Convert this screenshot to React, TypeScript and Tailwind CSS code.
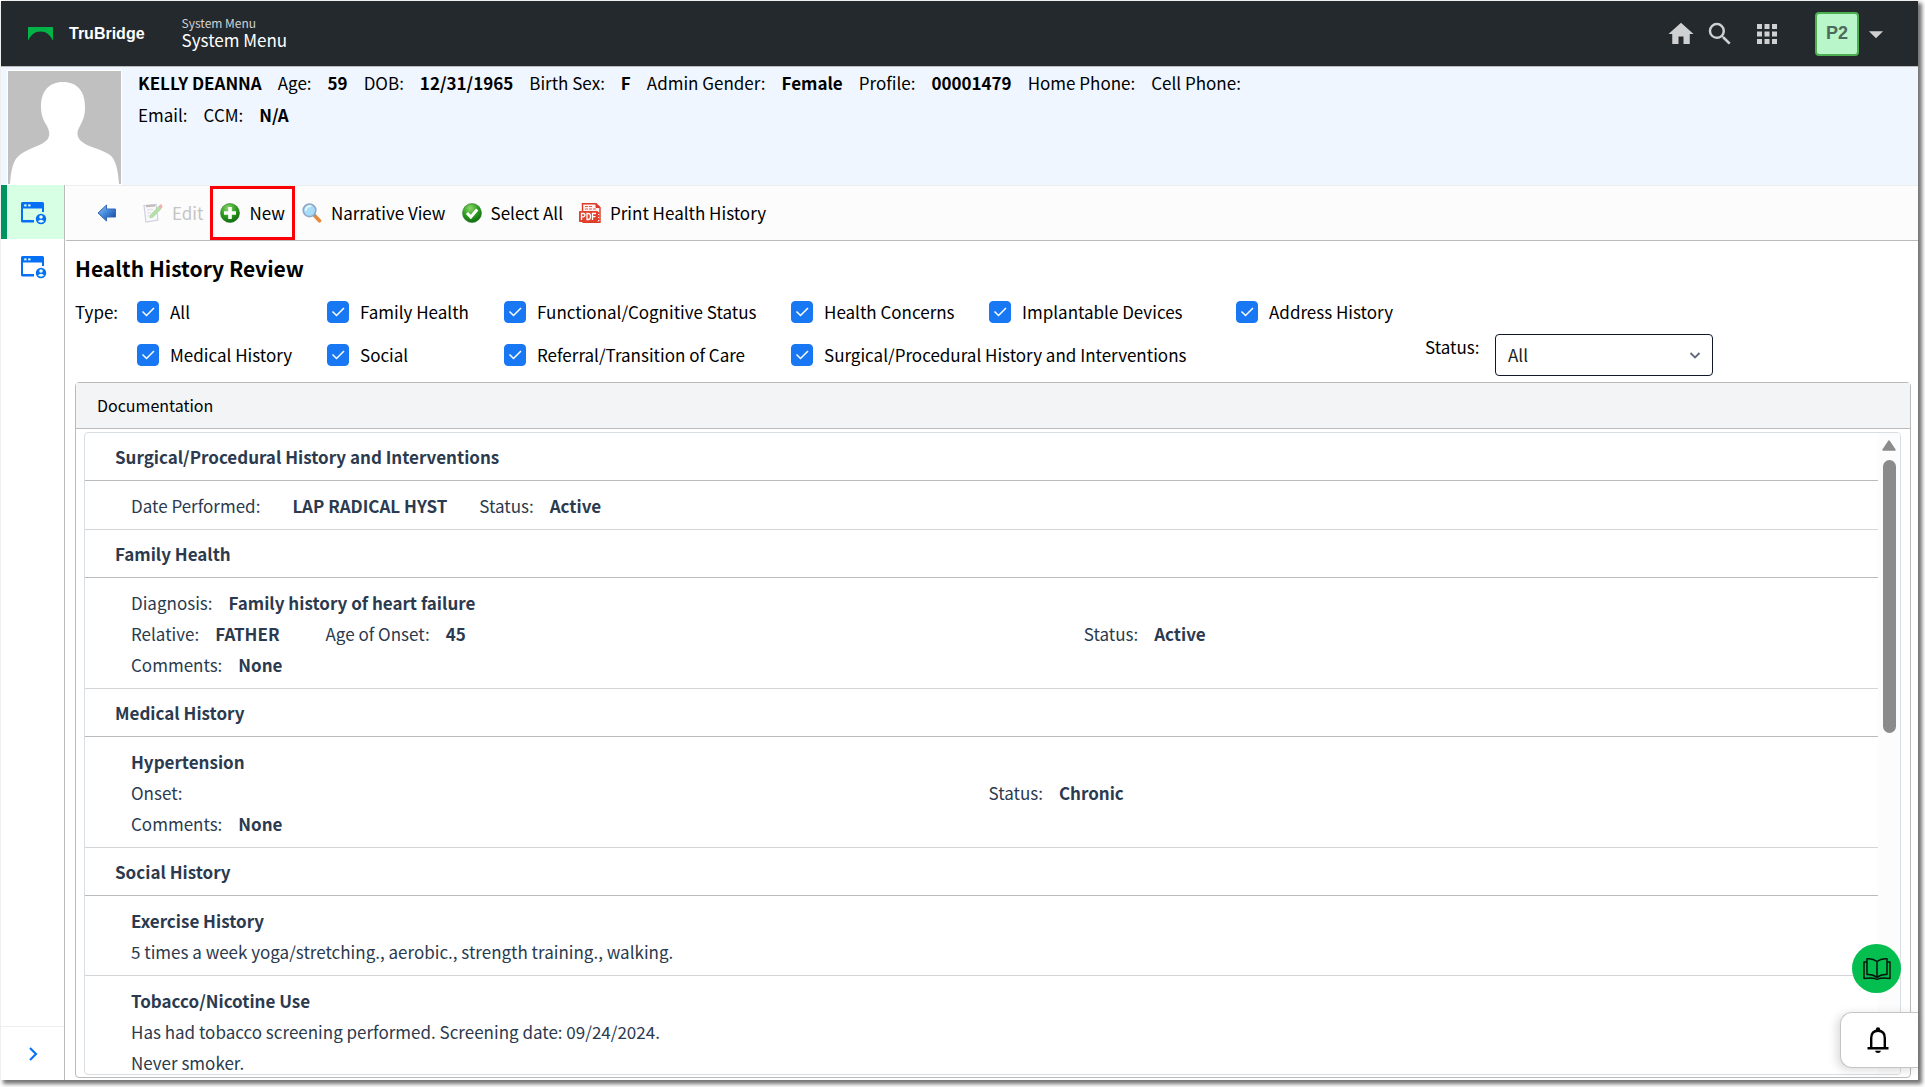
import type { ReactNode } from "react";
import { MdApps, MdArrowDropDown, MdHome, MdSearch } from "react-icons/md";

function BridgeLogo() {
  return (
    <svg width="25" height="13" viewBox="0 0 25 13" aria-hidden="true">
      <path d="M0 0H25V13H24.5C22 8 18 4.6 12.5 4.6S3 8 .5 13H0Z" fill="#04b347" />
    </svg>
  );
}

function WindowUserIcon() {
  return (
    <svg width="26" height="24" viewBox="0 0 26 24" aria-hidden="true">
      <path d="M0 2.5Q0 1 1.5 1H21.500Q23 1 23 2.500V11H21V7.500H2V19H13V21.500H1.500Q0 21.500 0 20Z" fill="#0570f5" />
      <rect x="3.200" y="3.400" width="2.300" height="2" fill="#e6fff0" />
      <rect x="7.200" y="3.400" width="2.300" height="2" fill="#e6fff0" />
      <circle cx="20" cy="18" r="5.200" fill="#0570f5" />
      <circle cx="20" cy="16" r="1.800" fill="#e6fff0" />
      <path d="M16.800 20.300Q20 17.200 23.200 20.300Q20 23 16.800 20.300Z" fill="#e6fff0" />
    </svg>
  );
}

function BackArrowIcon() {
  return (
    <svg width="20" height="18" viewBox="0 0 20 18" aria-hidden="true">
      <defs>
        <linearGradient id="back" x1="0" y1="0" x2="1" y2="1">
          <stop offset="0" stopColor="#8fc4f5" />
          <stop offset="0.5" stopColor="#3f86d8" />
          <stop offset="1" stopColor="#173f8f" />
        </linearGradient>
      </defs>
      <path d="M1 9 9.500 1V5H18.500V13H9.500V17Z" fill="url(#back)" stroke="#3568b4" strokeWidth="1" strokeLinejoin="round" />
    </svg>
  );
}

function EditIcon() {
  return (
    <svg width="20" height="20" viewBox="0 0 20 20" opacity="0.45" aria-hidden="true">
      <path d="M1 2.500 13 1.500 15 17 3 19Z" fill="#f5f5fb" stroke="#9a9ab8" strokeWidth="1.200" />
      <path d="M3 3.200 12 2.400" stroke="#7c6a6a" strokeWidth="2" />
      <path d="M4 7 10 6.500M4.400 10 8 9.700M4.800 13 7 12.800" stroke="#b4b4cc" />
      <path d="M15.500 3.500 18 6 10 14 6.800 15 7.600 12Z" fill="#5cc23c" stroke="#3b9a28" strokeWidth=".6" />
      <path d="M15.500 3.500 17 1.400Q19.600 1 19.500 4L18 6Z" fill="#e8584c" />
    </svg>
  );
}

function GreenBall({ id, children }: { id: string; children: ReactNode }) {
  return (
    <svg width="20" height="20" viewBox="0 0 20 20" aria-hidden="true">
      <defs>
        <radialGradient id={id} cx="0.400" cy="0.250" r="0.800">
          <stop offset="0" stopColor="#8ad86a" />
          <stop offset="0.550" stopColor="#2a9a1e" />
          <stop offset="1" stopColor="#0d6412" />
        </radialGradient>
      </defs>
      <circle cx="10" cy="10" r="9.500" fill={`url(#${id})`} stroke="#2c7d22" strokeWidth=".6" />
      {children}
    </svg>
  );
}

function MagnifierIcon() {
  return (
    <svg width="20" height="20" viewBox="0 0 20 20" aria-hidden="true">
      <path d="M12.500 12.500 17.500 17.800" stroke="#e58a3a" strokeWidth="3.600" strokeLinecap="round" />
      <path d="M11 11 13 13" stroke="#8f8f98" strokeWidth="2" />
      <circle cx="7.500" cy="7.300" r="6.300" fill="#a9dcf8" stroke="#8ba9c8" strokeWidth="1.600" />
      <path d="M3.800 7Q4.500 3.200 8.500 3.200" stroke="#ecf9ff" strokeWidth="1.800" fill="none" strokeLinecap="round" />
    </svg>
  );
}

function PdfIcon() {
  return (
    <svg width="22" height="20" viewBox="0 0 22 20" aria-hidden="true">
      <path d="M3.500 9V.8H17L21 4.500V19.200H3.500" fill="#fdf0ee" stroke="#dc3a26" strokeWidth="1.400" />
      <path d="M17 .8V4.500H21" fill="#dc3a26" stroke="#dc3a26" />
      <path d="M6 3.500H14M6 6H17" stroke="#e8604e" strokeWidth="1.200" strokeDasharray="3 1" />
      <rect x="0" y="8" width="19" height="11" rx="1" fill="#e2402b" />
      <path d="M2.500 17V10.500H4.500Q6 10.500 6 12T4.500 13.800H2.500M8 10.500V16.500H9.300Q11.500 16.500 11.500 13.500T9.300 10.500ZM13.500 17V10.500H17M13.500 13.600H16.500" stroke="#fff" strokeWidth="1.300" fill="none" />
      <path d="M19.500 9V17" stroke="#e2402b" strokeWidth="1.400" strokeDasharray="2 1" />
    </svg>
  );
}

function BookIcon() {
  return (
    <svg width="28" height="24" viewBox="0 0 28 24" fill="none" stroke="#06140b" strokeWidth="1.500" strokeLinejoin="round" aria-hidden="true">
      <path d="M14 4.500Q10 1.200 4 1.800V17.500Q10 17 14 20.500Q18 17 24 17.500V1.800Q18 1.200 14 4.500ZM14 4.500V20.500" />
      <path d="M4 5H1V21.500Q8 20.500 12 21.500Q14 23 16 21.500Q20 20.500 27 21.500V5H24" />
    </svg>
  );
}

function BellIcon() {
  return (
    <svg width="22" height="26" viewBox="0 0 22 26" aria-hidden="true">
      <circle cx="11" cy="2.400" r="2.200" fill="#000" />
      <path d="M4.200 21V11Q4.200 3.700 11 3.700T17.800 11V21" fill="none" stroke="#000" strokeWidth="2.400" />
      <path d="M.5 20H21.500V22.500H.5Z" fill="#000" />
      <path d="M8 23.800H14Q13.500 26 11 26T8 23.800Z" fill="#000" />
    </svg>
  );
}

function PatientPhoto() {
  return (
    <svg width="115" height="115" viewBox="0 0 115 115" role="img" aria-label="Patient photo">
      <rect width="115" height="115" fill="#fff" />
      <rect x="1" y="1" width="113" height="113" fill="#c0c0c0" />
      <path
        d="M56 12C42 12 34 21 34 37C34 46 37 51 40 56C43 62 43 66 40 70C34 76 22 78 14 84C6 89 4 100 3 114H112C111 100 109 90 103 85C95 79 80 77 74 71C69 66 70 61 73 56C76 50 78 46 78 37C78 21 70 12 56 12Z"
        fill="#fff"
      />
    </svg>
  );
}

function Checkbox({ label }: { label: string }) {
  return (
    <label className="flex items-center gap-[11px] whitespace-nowrap">
      <span className="relative flex">
        <input type="checkbox" defaultChecked className="peer size-[22px] appearance-none rounded border border-[#1877f2] checked:bg-[#1877f2]" />
        <svg className="pointer-events-none absolute inset-0 hidden peer-checked:block" width="22" height="22" viewBox="0 0 22 22" aria-hidden="true">
          <path d="M5.500 10.500 9.500 14.500 17 7" fill="none" stroke="#fff" strokeWidth="1.500" />
        </svg>
      </span>
      {label}
    </label>
  );
}

function ToolButton({ icon, label, disabled }: { icon: ReactNode; label: string; disabled?: boolean }) {
  return (
    <button type="button" disabled={disabled} className="flex items-center gap-[9px] leading-6 whitespace-nowrap disabled:text-[#c4c4c4]">
      {icon}
      {label}
    </button>
  );
}

function Field({ label, value }: { label: string; value?: string }) {
  return (
    <span className="flex gap-4 whitespace-nowrap">
      <span>{label}:</span>
      {value && <b>{value}</b>}
    </span>
  );
}

function SectionTitle({ children }: { children: ReactNode }) {
  return <h3 className="border-b border-[#b9bbbd] pt-2 pb-2 pl-[30px] leading-[31px] font-bold">{children}</h3>;
}

function Entry({ children }: { children: ReactNode }) {
  return <div className="border-b border-[#d3d5d7] pt-[9px] pr-8 pb-2 pl-[46px] leading-[31px]">{children}</div>;
}

const patient = [
  { label: "Age", value: "59" },
  { label: "DOB", value: "12/31/1965" },
  { label: "Birth Sex", value: "F" },
  { label: "Admin Gender", value: "Female" },
  { label: "Profile", value: "00001479" },
  { label: "Home Phone" },
  { label: "Cell Phone" },
  { label: "Email" },
  { label: "CCM", value: "N/A" },
];

export default function App() {
  return (
    <div className="h-screen min-h-[700px] bg-white pt-px pr-[7px] pb-[7px] pl-px font-['Noto_Sans_CJK_SC',sans-serif] text-[17px] text-black">
      <div className="relative flex h-full flex-col bg-white shadow-[3px_3px_4px_1px_rgba(0,0,0,0.55)]">
        <header className="flex h-[66px] shrink-0 items-center border-b border-[#bbb] bg-[#24292d] pr-[25px] pl-[27px] text-white">
          <BridgeLogo />
          <span className="ml-4 font-['Liberation_Sans',sans-serif] text-base font-bold">TruBridge</span>
          <div className="ml-[37px] pb-1">
            <div className="text-xs leading-4 text-[#d2d3d4]">System Menu</div>
            <div className="leading-[18px]">System Menu</div>
          </div>
          <div className="ml-auto flex items-center text-[#cfd0d1]">
            <button type="button" aria-label="Home"><MdHome size={30} /></button>
            <button type="button" aria-label="Search" className="ml-[9px]"><MdSearch size={30} /></button>
            <button type="button" aria-label="Apps" className="ml-[17px]"><MdApps size={30} /></button>
            <button type="button" aria-label="Account" className="ml-[33px] flex items-center">
              <span className="flex size-11 items-center justify-center rounded border-2 border-[#4caf50] bg-[#b9f6ca] pb-0.5 font-['Liberation_Sans',sans-serif] text-lg font-bold text-[#4d6b5c]">P2</span>
              <MdArrowDropDown size={34} />
            </button>
          </div>
        </header>

        <section className="flex h-[118px] shrink-0 items-start bg-[#eff6ff] pl-[6px]">
          <div className="pt-[3px]">
            <PatientPhoto />
          </div>
          <div className="ml-4 flex max-w-[1130px] flex-wrap content-start gap-x-4 leading-8">
            <b>KELLY DEANNA</b>
            {patient.map((p) => (
              <Field key={p.label} label={p.label} value={p.value} />
            ))}
          </div>
        </section>

        <div className="flex min-h-0 flex-1">
          <nav className="flex w-16 shrink-0 flex-col border-r border-[#bbb]">
            <a href="#patient" aria-label="Patient window" className="flex h-[54px] items-center border-l-[6px] border-[#00935f] bg-[#d6ffe3] pt-0.5 pl-[14px]">
              <WindowUserIcon />
            </a>
            <a href="#chart" aria-label="Chart window" className="flex h-[54px] items-center pt-0.5 pl-5">
              <WindowUserIcon />
            </a>
            <button type="button" aria-label="Expand menu" className="mt-auto flex h-[54px] items-center justify-center border-t border-[#eee]">
              <svg width="10" height="14" viewBox="0 0 10 14" aria-hidden="true">
                <path d="M2 1 8 7 2 13" fill="none" stroke="#0a74f5" strokeWidth="2.200" />
              </svg>
            </button>
          </nav>

          <main className="flex min-w-0 flex-1 flex-col">
            <div className="ml-px flex h-14 shrink-0 items-center border-t border-b border-t-[#eee] border-b-[#bbb] bg-[#fcfcfc] pl-[31px]">
              <button type="button" aria-label="Back"><BackArrowIcon /></button>
              <div className="ml-[26px]">
                <ToolButton icon={<EditIcon />} label="Edit" disabled />
              </div>
              <div className="relative ml-[17px]">
                <ToolButton
                  icon={
                    <GreenBall id="add">
                      <path d="M10 4V16M4 10H16" stroke="#fff" strokeWidth="3.600" />
                    </GreenBall>
                  }
                  label="New"
                />
                <span className="pointer-events-none absolute -inset-x-[10px] -inset-y-[15px] border-[3px] border-[#fb0007]" />
              </div>
              <div className="ml-[17px] flex items-center gap-4">
                <ToolButton icon={<MagnifierIcon />} label="Narrative View" />
                <ToolButton
                  icon={
                    <GreenBall id="ok">
                      <path d="M5 10 8.800 14 15.200 6.500" fill="none" stroke="#fff" strokeWidth="3" />
                    </GreenBall>
                  }
                  label="Select All"
                />
                <ToolButton icon={<PdfIcon />} label="Print Health History" />
              </div>
            </div>

            <div className="flex min-h-0 flex-1 flex-col pr-[7px] pb-[2px] pl-[10px]">
              <h1 className="mt-[11px] text-[21px] leading-8 font-bold">Health History Review</h1>

              <div className="flex items-start pt-[6px]">
                <span className="w-[62px] shrink-0 leading-[43px]">Type:</span>
                <div className="grid grid-cols-[190px_177px_287px_198px_247px_auto] leading-[43px]">
                  <Checkbox label="All" />
                  <Checkbox label="Family Health" />
                  <Checkbox label="Functional/Cognitive Status" />
                  <Checkbox label="Health Concerns" />
                  <Checkbox label="Implantable Devices" />
                  <Checkbox label="Address History" />
                  <Checkbox label="Medical History" />
                  <Checkbox label="Social" />
                  <Checkbox label="Referral/Transition of Care" />
                  <div className="col-span-3">
                    <Checkbox label="Surgical/Procedural History and Interventions" />
                  </div>
                </div>
                <div className="mt-11 ml-8 flex">
                  <label htmlFor="status" className="w-[70px] leading-[26px]">Status:</label>
                  <div className="relative">
                    <select id="status" defaultValue="All" className="h-[42px] w-[218px] appearance-none rounded border border-[#111827] bg-white px-3 text-[#222]">
                      <option>All</option>
                    </select>
                    <svg className="pointer-events-none absolute top-[18px] right-3" width="12" height="8" viewBox="0 0 12 8" aria-hidden="true">
                      <path d="M1.500 1 6 5.500 10.500 1" fill="none" stroke="#5f6b7a" strokeWidth="1.800" />
                    </svg>
                  </div>
                </div>
              </div>

              <section className="mt-[6px] flex min-h-0 flex-1 flex-col rounded-sm border border-[#bbb]">
                <h2 className="shrink-0 border-b border-[#bbb] bg-[#f3f4f6] pl-[21px] text-base leading-[45px]">Documentation</h2>
                <div className="mt-[3px] mr-[9px] mb-[2px] ml-2 flex min-h-0 flex-1 overflow-hidden rounded border border-[#d9dee2] text-[#2b3a4e]">
                  <div className="min-w-0 flex-1 overflow-hidden">
                    <SectionTitle>Surgical/Procedural History and Interventions</SectionTitle>
                    <Entry>
                      <div className="flex gap-8">
                        <span>Date Performed:</span>
                        <b>LAP RADICAL HYST</b>
                        <Field label="Status" value="Active" />
                      </div>
                    </Entry>

                    <SectionTitle>Family Health</SectionTitle>
                    <Entry>
                      <Field label="Diagnosis" value="Family history of heart failure" />
                      <div className="grid grid-cols-[5fr_4fr]">
                        <div className="flex gap-[46px]">
                          <Field label="Relative" value="FATHER" />
                          <Field label="Age of Onset" value="45" />
                        </div>
                        <Field label="Status" value="Active" />
                      </div>
                      <Field label="Comments" value="None" />
                    </Entry>

                    <SectionTitle>Medical History</SectionTitle>
                    <Entry>
                      <b>Hypertension</b>
                      <div className="grid grid-cols-2">
                        <Field label="Onset" />
                        <Field label="Status" value="Chronic" />
                      </div>
                      <Field label="Comments" value="None" />
                    </Entry>

                    <SectionTitle>Social History</SectionTitle>
                    <Entry>
                      <b>Exercise History</b>
                      <p>5 times a week yoga/stretching., aerobic., strength training., walking.</p>
                    </Entry>
                    <Entry>
                      <b>Tobacco/Nicotine Use</b>
                      <p>Has had tobacco screening performed. Screening date: 09/24/2024.</p>
                      <p>Never smoker.</p>
                    </Entry>
                  </div>
                  <div className="flex w-[22px] shrink-0 flex-col items-center bg-[#fcfcfc] pt-[7px]">
                    <svg width="14" height="11" viewBox="0 0 14 11" aria-hidden="true">
                      <path d="M7 1 13 10H1Z" fill="#8b8b8b" stroke="#8b8b8b" strokeWidth="1.500" strokeLinejoin="round" />
                    </svg>
                    <div className="mt-[9px] h-[43%] w-[13px] rounded-full bg-[#8b8b8b]" />
                  </div>
                </div>
              </section>
            </div>
          </main>
        </div>

        <button type="button" aria-label="Help library" className="absolute right-[17px] bottom-[87px] flex size-[49px] items-center justify-center rounded-full bg-[#04bf4f]">
          <BookIcon />
        </button>
        <button type="button" aria-label="Notifications" className="absolute right-0 bottom-[12px] flex h-14 w-[78px] items-center rounded-l-xl border border-r-0 border-[#c4c4c4] bg-white pl-[26px] shadow-[-3px_2px_10px_rgba(0,0,0,0.15)]">
          <BellIcon />
        </button>
      </div>
    </div>
  );
}
